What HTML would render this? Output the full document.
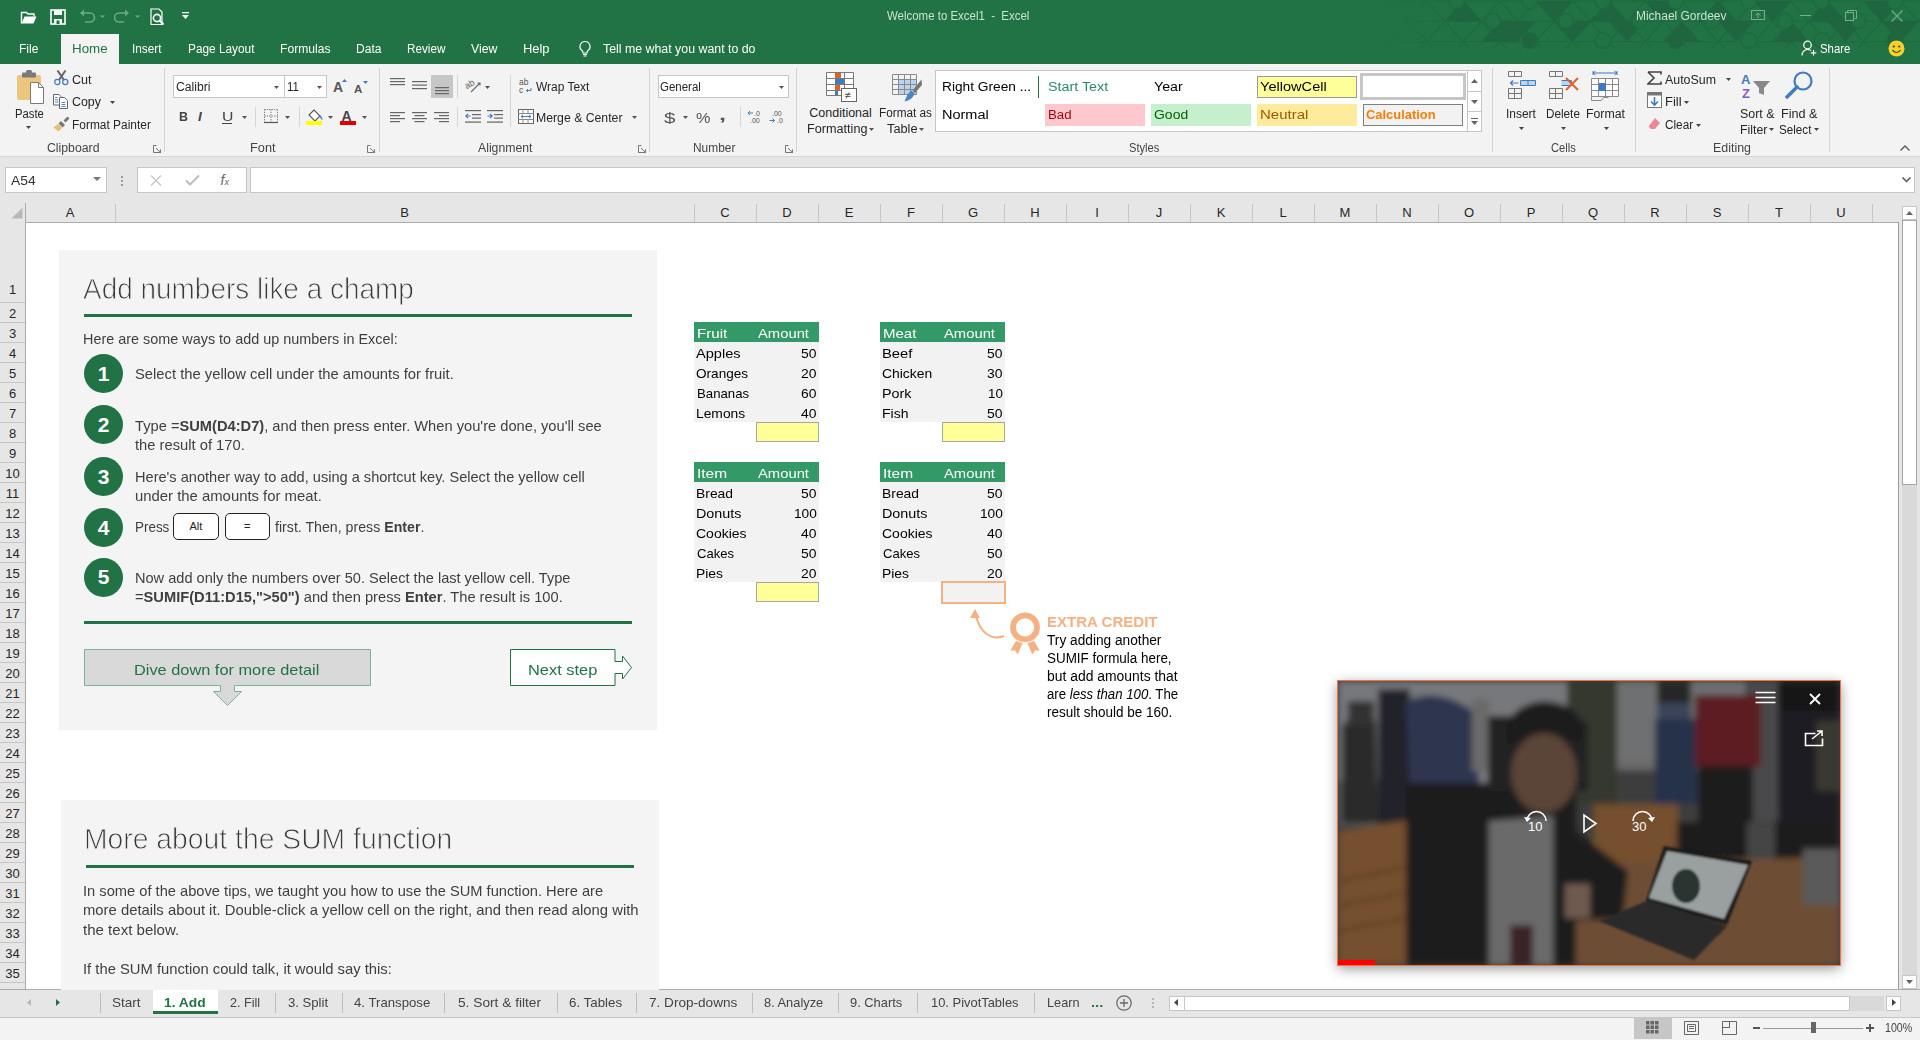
<!DOCTYPE html><html><head><meta charset="utf-8"><title>Excel</title><style>
html,body{margin:0;padding:0;width:1920px;height:1040px;overflow:hidden;background:#fff;font-family:"Liberation Sans",sans-serif;}
.a{position:absolute;}
.t{position:absolute;white-space:pre;transform-origin:0 0;}
</style></head><body>

<div class="a" style="left:0px;top:0px;width:1920px;height:64px;background:#217346;"></div>
<svg class="a" style="left:1380px;top:0px;" width="540" height="52" viewBox="0 0 540 52"><defs><linearGradient id="fadeX" x1="0" x2="1" y1="0" y2="0"><stop offset="0" stop-color="#fff" stop-opacity="0"/><stop offset="0.15" stop-color="#fff" stop-opacity="1"/><stop offset="1" stop-color="#fff" stop-opacity="1"/></linearGradient><mask id="fm"><rect x="0" y="0" width="540" height="64" fill="url(#fadeX)"/></mask></defs><g mask="url(#fm)"><path d="M0 1.0H540M0 21.3H540M0 41.6H540M-153.4 61.9L-98.8 1.0M-153.4 61.9L-208.0 1.0M-117.0 61.9L-62.4 1.0M-117.0 61.9L-171.6 1.0M-80.6 61.9L-26.0 1.0M-80.6 61.9L-135.2 1.0M-44.2 61.9L10.4 1.0M-44.2 61.9L-98.8 1.0M-7.8 61.9L46.8 1.0M-7.8 61.9L-62.4 1.0M28.6 61.9L83.2 1.0M28.6 61.9L-26.0 1.0M65.0 61.9L119.6 1.0M65.0 61.9L10.4 1.0M101.4 61.9L156.0 1.0M101.4 61.9L46.8 1.0M137.8 61.9L192.4 1.0M137.8 61.9L83.2 1.0M174.2 61.9L228.8 1.0M174.2 61.9L119.6 1.0M210.6 61.9L265.2 1.0M210.6 61.9L156.0 1.0M247.0 61.9L301.6 1.0M247.0 61.9L192.4 1.0M283.4 61.9L338.0 1.0M283.4 61.9L228.8 1.0M319.8 61.9L374.4 1.0M319.8 61.9L265.2 1.0M356.2 61.9L410.8 1.0M356.2 61.9L301.6 1.0M392.6 61.9L447.2 1.0M392.6 61.9L338.0 1.0M429.0 61.9L483.6 1.0M429.0 61.9L374.4 1.0M465.4 61.9L520.0 1.0M465.4 61.9L410.8 1.0M501.8 61.9L556.4 1.0M501.8 61.9L447.2 1.0M538.2 61.9L592.8 1.0M538.2 61.9L483.6 1.0M574.6 61.9L629.2 1.0M574.6 61.9L520.0 1.0M611.0 61.9L665.6 1.0M611.0 61.9L556.4 1.0M647.4 61.9L702.0 1.0M647.4 61.9L592.8 1.0M683.8 61.9L738.4 1.0M683.8 61.9L629.2 1.0M720.2 61.9L774.8 1.0M720.2 61.9L665.6 1.0M756.6 61.9L811.2 1.0M756.6 61.9L702.0 1.0" stroke="#1d6b3f" stroke-width="1.3" fill="none" clip-path="inset(0 0 14px 0)"/><path d="M83.2 1.0L101.4 21.3L65.0 21.3zM119.6 21.3L137.8 41.6L101.4 41.6zM119.6 21.3L156.0 21.3L137.8 41.6zM156.0 1.0L192.4 1.0L174.2 21.3zM174.2 21.3L210.6 21.3L192.4 41.6zM228.8 1.0L247.0 21.3L210.6 21.3zM228.8 21.3L265.2 21.3L247.0 41.6zM265.2 1.0L301.6 1.0L283.4 21.3zM301.6 21.3L319.8 41.6L283.4 41.6zM338.0 1.0L356.2 21.3L319.8 21.3zM338.0 21.3L374.4 21.3L356.2 41.6zM374.4 1.0L410.8 1.0L392.6 21.3zM410.8 21.3L429.0 41.6L392.6 41.6zM447.2 1.0L465.4 21.3L429.0 21.3zM447.2 21.3L483.6 21.3L465.4 41.6zM483.6 1.0L520.0 1.0L501.8 21.3zM501.8 21.3L538.2 21.3L520.0 41.6z" fill="#1e6540"/><circle cx="76.6" cy="1.4" r="7.5" fill="#217346" stroke="#1d6b3f" stroke-width="1.6"/><circle cx="113.1" cy="21" r="7.5" fill="#217346" stroke="#1d6b3f" stroke-width="1.6"/><circle cx="149.6" cy="1.4" r="7.5" fill="#217346" stroke="#1d6b3f" stroke-width="1.6"/><circle cx="186.1" cy="21" r="7.5" fill="#217346" stroke="#1d6b3f" stroke-width="1.6"/><circle cx="222.6" cy="1.4" r="7.5" fill="#217346" stroke="#1d6b3f" stroke-width="1.6"/><circle cx="259.1" cy="21" r="7.5" fill="#217346" stroke="#1d6b3f" stroke-width="1.6"/><circle cx="295.6" cy="1.4" r="7.5" fill="#217346" stroke="#1d6b3f" stroke-width="1.6"/><circle cx="332.1" cy="21" r="7.5" fill="#217346" stroke="#1d6b3f" stroke-width="1.6"/><circle cx="368.6" cy="1.4" r="7.5" fill="#217346" stroke="#1d6b3f" stroke-width="1.6"/><circle cx="405.1" cy="21" r="7.5" fill="#217346" stroke="#1d6b3f" stroke-width="1.6"/><circle cx="441.6" cy="1.4" r="7.5" fill="#217346" stroke="#1d6b3f" stroke-width="1.6"/><circle cx="478.1" cy="21" r="7.5" fill="#217346" stroke="#1d6b3f" stroke-width="1.6"/><circle cx="514.6" cy="1.4" r="7.5" fill="#217346" stroke="#1d6b3f" stroke-width="1.6"/><circle cx="551.1" cy="21" r="7.5" fill="#217346" stroke="#1d6b3f" stroke-width="1.6"/><circle cx="149.8" cy="40.6" r="7.8" fill="#1e6540" stroke="#1d6b3f" stroke-width="1.6"/><circle cx="222.8" cy="40.6" r="7.8" fill="#217346" stroke="#1d6b3f" stroke-width="1.6"/><circle cx="295.8" cy="40.6" r="7.8" fill="#1e6540" stroke="#1d6b3f" stroke-width="1.6"/><circle cx="368.8" cy="40.6" r="7.8" fill="#217346" stroke="#1d6b3f" stroke-width="1.6"/><circle cx="441.8" cy="40.6" r="7.8" fill="#217346" stroke="#1d6b3f" stroke-width="1.6"/><circle cx="514.8" cy="40.6" r="7.8" fill="#1e6540" stroke="#1d6b3f" stroke-width="1.6"/><circle cx="587.8" cy="40.6" r="7.8" fill="#217346" stroke="#1d6b3f" stroke-width="1.6"/></g></svg>
<svg class="a" style="left:20px;top:9px;" width="20" height="16" viewBox="0 0 20 16"><path d="M1.5 14.5V3.5h5l1.5 1.5h6v2.5" fill="none" stroke="#fff" stroke-width="1.4"/><path d="M1.5 14.5l3-7h12l-3 7z" fill="#fff"/></svg>
<svg class="a" style="left:50px;top:9px;" width="16" height="16" viewBox="0 0 16 16"><rect x="1" y="1" width="14" height="14" fill="none" stroke="#fff" stroke-width="1.6"/><rect x="4" y="1" width="8" height="5" fill="#fff"/><rect x="4" y="10" width="8" height="5" fill="#fff"/><rect x="6.5" y="11.5" width="3" height="3.5" fill="#217346"/></svg>
<svg class="a" style="left:79px;top:9px;" width="26" height="15" viewBox="0 0 26 15"><path d="M3 4h8a4.5 4.5 0 0 1 0 9H6" fill="none" stroke="#6aa886" stroke-width="1.6"/><path d="M1 4l4-3.5v7z" fill="#6aa886"/><path d="M21 6.5h5l-2.5 2.5z" fill="#6aa886"/></svg>
<svg class="a" style="left:114px;top:9px;" width="26" height="15" viewBox="0 0 26 15"><path d="M13 4H5a4.5 4.5 0 0 0 0 9h5" fill="none" stroke="#6aa886" stroke-width="1.6"/><path d="M15 4l-4-3.5v7z" fill="#6aa886"/><path d="M21 6.5h5l-2.5 2.5z" fill="#6aa886"/></svg>
<svg class="a" style="left:150px;top:8px;" width="17" height="18" viewBox="0 0 17 18"><path d="M1 1h8l3 3v12.5H1z" fill="none" stroke="#fff" stroke-width="1.2"/><circle cx="7" cy="10" r="3.6" fill="none" stroke="#fff" stroke-width="1.6"/><path d="M9.5 12.5l4 4" stroke="#fff" stroke-width="2"/></svg>
<svg class="a" style="left:182px;top:12px;" width="8" height="9" viewBox="0 0 8 9"><rect x="0" y="0" width="7" height="1.3" fill="#fff"/><path d="M0 3h7l-3.5 4z" fill="#fff"/></svg>
<span class="t" style="left:887.31px;top:10.00px;font-size:12.5px;line-height:12.5px;color:#c9e2d2;transform:scaleX(0.9162);">Welcome to Excel1  -  Excel</span>
<span class="t" style="left:1636.28px;top:10.00px;font-size:12.5px;line-height:12.5px;color:#c9e2d2;transform:scaleX(0.9570);">Michael Gordeev</span>
<svg class="a" style="left:1751px;top:10px;" width="15" height="11" viewBox="0 0 15 11"><rect x="0.5" y="0.5" width="13" height="9" fill="none" stroke="#79ab8f"/><path d="M7 8V3M4.5 5.5L7 3l2.5 2.5" fill="none" stroke="#79ab8f"/></svg>
<div class="a" style="left:1800px;top:15px;width:11px;height:1px;background:#79ab8f;"></div>
<svg class="a" style="left:1845px;top:10px;" width="12" height="11" viewBox="0 0 12 11"><rect x="0.5" y="2.5" width="8" height="8" fill="none" stroke="#79ab8f"/><path d="M2.5 2.5V0.5h9v8h-2" fill="none" stroke="#79ab8f"/></svg>
<svg class="a" style="left:1891px;top:10px;" width="12" height="12" viewBox="0 0 12 12"><path d="M0.5 0.5l11 11M11.5 0.5l-11 11" stroke="#79ab8f" stroke-width="1.1"/></svg>
<div class="a" style="left:61px;top:34px;width:58px;height:30px;background:#f3f3f3;"></div>
<span class="t" style="left:19.28px;top:43.00px;font-size:12.5px;line-height:12.5px;color:#ffffff;transform:scaleX(0.9648);">File</span>
<span class="t" style="left:72.20px;top:43.00px;font-size:12.5px;line-height:12.5px;color:#217346;transform:scaleX(1.0677);">Home</span>
<span class="t" style="left:132.29px;top:43.00px;font-size:12.5px;line-height:12.5px;color:#ffffff;transform:scaleX(0.9407);">Insert</span>
<span class="t" style="left:188.29px;top:43.00px;font-size:12.5px;line-height:12.5px;color:#ffffff;transform:scaleX(0.9461);">Page Layout</span>
<span class="t" style="left:280.27px;top:43.00px;font-size:12.5px;line-height:12.5px;color:#ffffff;transform:scaleX(0.9685);">Formulas</span>
<span class="t" style="left:356.28px;top:43.00px;font-size:12.5px;line-height:12.5px;color:#ffffff;transform:scaleX(0.9636);">Data</span>
<span class="t" style="left:407.30px;top:43.00px;font-size:12.5px;line-height:12.5px;color:#ffffff;transform:scaleX(0.9367);">Review</span>
<span class="t" style="left:471.26px;top:43.00px;font-size:12.5px;line-height:12.5px;color:#ffffff;transform:scaleX(0.9852);">View</span>
<span class="t" style="left:523.23px;top:43.00px;font-size:12.5px;line-height:12.5px;color:#ffffff;transform:scaleX(1.0323);">Help</span>
<span class="t" style="left:603.26px;top:43.00px;font-size:12.5px;line-height:12.5px;color:#ffffff;transform:scaleX(0.9885);">Tell me what you want to do</span>
<svg class="a" style="left:578px;top:40px;" width="14" height="17" viewBox="0 0 14 17"><path d="M7 1.5a5 5 0 0 0-3 9c.8.7 1 1.5 1 2.5h4c0-1 .2-1.8 1-2.5a5 5 0 0 0-3-9z" fill="none" stroke="#fff" stroke-width="1.2"/><path d="M5 14.5h4M5.5 16h3" stroke="#fff" stroke-width="1.1"/></svg>
<svg class="a" style="left:1801px;top:40px;" width="16" height="16" viewBox="0 0 16 16"><circle cx="6.5" cy="5" r="3.8" fill="none" stroke="#fff" stroke-width="1.2"/><path d="M1 15.5c0-3.5 2.5-6 5.5-6 1.5 0 2.5.4 3.5 1" fill="none" stroke="#fff" stroke-width="1.2"/><path d="M12.5 10v5.5M9.8 12.8h5.5" stroke="#fff" stroke-width="1.2"/></svg>
<span class="t" style="left:1820.32px;top:43.00px;font-size:12.5px;line-height:12.5px;color:#ffffff;transform:scaleX(0.9103);">Share</span>
<svg class="a" style="left:1888px;top:40px;" width="17" height="17" viewBox="0 0 17 17"><circle cx="8.5" cy="8.5" r="8" fill="#f7d02c"/><circle cx="5.8" cy="6.5" r="1.1" fill="#3b3b00"/><circle cx="11.2" cy="6.5" r="1.1" fill="#3b3b00"/><path d="M4.5 10a4.5 4.5 0 0 0 8 0" fill="none" stroke="#3b3b00" stroke-width="1.1"/></svg>
<div class="a" style="left:0px;top:64px;width:1920px;height:92px;background:#f3f3f3;"></div>
<div class="a" style="left:0px;top:156px;width:1920px;height:1px;background:#d6d6d6;"></div>
<svg class="a" style="left:16px;top:70px;" width="30" height="34" viewBox="0 0 30 34"><rect x="1" y="5" width="24" height="25" rx="2" fill="#ecc67d"/><rect x="6" y="2.5" width="14" height="5" rx="1" fill="#7a7a7a"/><rect x="10" y="0" width="6" height="4" rx="1.5" fill="#7a7a7a"/><path d="M14.5 12.5h8l5 5v16h-13z" fill="#fff" stroke="#7a7a7a" stroke-width="1"/><path d="M22.5 12.5v5h5" fill="none" stroke="#7a7a7a"/></svg>
<span class="t" style="left:14.82px;top:108.00px;font-size:12.5px;line-height:12.5px;color:#262626;transform:scaleX(0.9026);">Paste</span>
<svg class="a" style="left:26px;top:126px;" width="5" height="3" viewBox="0 0 5 3"><path d="M0 0h5l-2.5 3z" fill="#444"/></svg>
<svg class="a" style="left:54px;top:70px;" width="15" height="16" viewBox="0 0 15 16"><path d="M3.5 0.5l6.5 9.5M11.5 0.5L5 10" stroke="#666" stroke-width="2"/><circle cx="3.3" cy="12" r="2.6" fill="none" stroke="#3d7bc4" stroke-width="1.2"/><circle cx="11.3" cy="12" r="2.6" fill="none" stroke="#3d7bc4" stroke-width="1.2"/></svg>
<span class="t" style="left:71.75px;top:74.00px;font-size:12.5px;line-height:12.5px;color:#262626;transform:scaleX(1.0026);">Cut</span>
<svg class="a" style="left:53px;top:94px;" width="16" height="15" viewBox="0 0 16 15"><path d="M0.5 0.5h5.5l2 2v8.5h-7.5z" fill="#fff" stroke="#666"/><path d="M6.5 3.5h5l3 3v8h-8z" fill="#fff" stroke="#666"/><path d="M2 3.5h2.5M2 5.8h3.5M2 8h3.5M8.5 8.5h4M8.5 10.5h4M8.5 12.5h4" stroke="#3d7bc4" stroke-width="0.9"/></svg>
<span class="t" style="left:71.76px;top:96.00px;font-size:12.5px;line-height:12.5px;color:#262626;transform:scaleX(0.9932);">Copy</span>
<svg class="a" style="left:110px;top:101px;" width="5" height="3" viewBox="0 0 5 3"><path d="M0 0h5l-2.5 3z" fill="#444"/></svg>
<svg class="a" style="left:53px;top:116px;" width="17" height="16" viewBox="0 0 17 16"><path d="M10.5 4.5l4-4 2 2-4 4z" fill="#777"/><path d="M8 5l4 4-2.5 2.5-4-4z" fill="#777"/><path d="M5 8l4 4-3.5 3.5L0.5 11.5z" fill="#e8bf6e"/></svg>
<span class="t" style="left:71.78px;top:119.00px;font-size:12.5px;line-height:12.5px;color:#262626;transform:scaleX(0.9548);">Format Painter</span>
<span class="t" style="left:47.26px;top:142.00px;font-size:12.5px;line-height:12.5px;color:#444;transform:scaleX(0.9805);">Clipboard</span>
<svg class="a" style="left:153px;top:145px;" width="8" height="8" viewBox="0 0 8 8"><path d="M0.5 0.5h3M0.5 0.5v7h7v-3" fill="none" stroke="#777"/><path d="M3 3l4.5 4.5M7.5 4.5v3h-3" fill="none" stroke="#777"/></svg>
<div class="a" style="left:164px;top:68px;width:1px;height:84px;background:#d5d5d5;"></div>
<div class="a" style="left:173px;top:75px;width:112px;height:23px;background:#fff;border:1px solid #c6c6c6;box-sizing:border-box;"></div>
<div class="a" style="left:284px;top:75px;width:43px;height:23px;background:#fff;border:1px solid #c6c6c6;box-sizing:border-box;"></div>
<span class="t" style="left:175.77px;top:81.00px;font-size:12.5px;line-height:12.5px;color:#262626;transform:scaleX(0.9724);">Calibri</span>
<span class="t" style="left:286.81px;top:81.00px;font-size:12.5px;line-height:12.5px;color:#262626;transform:scaleX(0.9143);">11</span>
<svg class="a" style="left:273.5px;top:85.5px;" width="5" height="3" viewBox="0 0 5 3"><path d="M0 0h5l-2.5 3z" fill="#555"/></svg>
<svg class="a" style="left:317px;top:85.5px;" width="5" height="3" viewBox="0 0 5 3"><path d="M0 0h5l-2.5 3z" fill="#555"/></svg>
<svg class="a" style="left:333px;top:78px;" width="14" height="15" viewBox="0 0 14 15"><text x="0" y="14" font-family="Liberation Sans" font-size="14" font-weight="bold" fill="#555">A</text><path d="M9 4l2.5-3 2.5 3z" fill="#3d7bc4"/></svg>
<svg class="a" style="left:354px;top:80px;" width="14" height="13" viewBox="0 0 14 13"><text x="0" y="12.5" font-family="Liberation Sans" font-size="11.5" font-weight="bold" fill="#555">A</text><path d="M9 1h5l-2.5 3z" fill="#3d7bc4"/></svg>
<span class="t" style="left:179.25px;top:110.00px;font-size:13px;line-height:13px;color:#444;font-weight:bold;transform:scaleX(0.9578);">B</span>
<span class="t" style="left:197.98px;top:110.00px;font-size:13.5px;line-height:13.5px;color:#444;font-weight:bold;font-style:italic;font-family:"Liberation Serif",serif;transform:scaleX(3.7285);">I</span>
<span class="t" style="left:221.55px;top:110.00px;font-size:13px;line-height:13px;color:#444;transform:scaleX(1.2132);">U</span>
<div class="a" style="left:222px;top:123px;width:10px;height:1px;background:#444;"></div>
<svg class="a" style="left:242px;top:115.5px;" width="5" height="3" viewBox="0 0 5 3"><path d="M0 0h5l-2.5 3z" fill="#555"/></svg>
<div class="a" style="left:255px;top:107px;width:1px;height:20px;background:#d5d5d5;"></div>
<svg class="a" style="left:264px;top:109px;" width="14" height="15" viewBox="0 0 14 15"><path d="M0.5 0.5h13M0.5 0.5v13M13.5 .5v13M7 0.5v13M0.5 7h13" fill="none" stroke="#777" stroke-width="1" stroke-dasharray="1.2 1.2"/><path d="M0 13.5h14" stroke="#555" stroke-width="1.2"/></svg>
<svg class="a" style="left:285px;top:115.5px;" width="5" height="3" viewBox="0 0 5 3"><path d="M0 0h5l-2.5 3z" fill="#555"/></svg>
<div class="a" style="left:299px;top:107px;width:1px;height:20px;background:#d5d5d5;"></div>
<svg class="a" style="left:306px;top:109px;" width="17" height="16" viewBox="0 0 17 16"><path d="M3 6l5-5 6 6-5 5z" fill="#fff" stroke="#555" stroke-width="1.1"/><path d="M14 7c1 1.5 2 2.5 2 3.5" stroke="#3d7bc4" stroke-width="1.5" fill="none"/><rect x="0" y="12" width="16" height="4" fill="#ffff00"/></svg>
<svg class="a" style="left:328px;top:115.5px;" width="5" height="3" viewBox="0 0 5 3"><path d="M0 0h5l-2.5 3z" fill="#555"/></svg>
<svg class="a" style="left:340px;top:109px;" width="17" height="16" viewBox="0 0 17 16"><text x="1.5" y="11.5" font-family="Liberation Sans" font-size="14" font-weight="bold" fill="#444">A</text><rect x="0" y="12" width="16" height="4" fill="#e00000"/></svg>
<svg class="a" style="left:362px;top:115.5px;" width="5" height="3" viewBox="0 0 5 3"><path d="M0 0h5l-2.5 3z" fill="#555"/></svg>
<span class="t" style="left:250.23px;top:142.00px;font-size:12.5px;line-height:12.5px;color:#444;transform:scaleX(1.0206);">Font</span>
<svg class="a" style="left:367px;top:145px;" width="8" height="8" viewBox="0 0 8 8"><path d="M0.5 0.5h3M0.5 0.5v7h7v-3" fill="none" stroke="#777"/><path d="M3 3l4.5 4.5M7.5 4.5v3h-3" fill="none" stroke="#777"/></svg>
<div class="a" style="left:379px;top:68px;width:1px;height:84px;background:#d5d5d5;"></div>
<svg class="a" style="left:390px;top:78px;" width="15" height="9" viewBox="0 0 15 9"><rect x="0" y="0" width="15" height="1.2" fill="#666"/><rect x="0" y="3" width="15" height="1.2" fill="#666"/><rect x="0" y="6" width="15" height="1.2" fill="#666"/></svg>
<svg class="a" style="left:412px;top:81px;" width="16" height="9" viewBox="0 0 16 9"><rect x="0" y="0" width="15" height="1.2" fill="#666"/><rect x="0" y="3.5" width="15" height="1.2" fill="#666"/><rect x="0" y="7" width="15" height="1.2" fill="#666"/></svg>
<div class="a" style="left:431px;top:75px;width:22px;height:23px;background:#c6c6c6;"></div>
<svg class="a" style="left:435px;top:87px;" width="15" height="8" viewBox="0 0 15 8"><rect x="0" y="0" width="14" height="1.2" fill="#666"/><rect x="0" y="3" width="14" height="1.2" fill="#666"/><rect x="0" y="6" width="14" height="1.2" fill="#666"/></svg>
<div class="a" style="left:457px;top:75px;width:1px;height:23px;background:#d5d5d5;"></div>
<svg class="a" style="left:465px;top:78px;" width="17" height="15" viewBox="0 0 17 15"><text x="0" y="9" font-family="Liberation Sans" font-size="9" fill="#666" transform="rotate(-30 5 7)">ab</text><path d="M6 14L15 5M12.5 5H15v2.5" fill="none" stroke="#666" stroke-width="1.1"/></svg>
<svg class="a" style="left:485px;top:85.5px;" width="5" height="3" viewBox="0 0 5 3"><path d="M0 0h5l-2.5 3z" fill="#555"/></svg>
<svg class="a" style="left:390px;top:112px;" width="15" height="11" viewBox="0 0 15 11"><rect x="0" y="0" width="15" height="1.2" fill="#666"/><rect x="0" y="3" width="10" height="1.2" fill="#666"/><rect x="0" y="6" width="15" height="1.2" fill="#666"/><rect x="0" y="9" width="10" height="1.2" fill="#666"/></svg>
<svg class="a" style="left:412px;top:112px;" width="15" height="11" viewBox="0 0 15 11"><rect x="0.0" y="0" width="15" height="1.2" fill="#666"/><rect x="2.5" y="3" width="10" height="1.2" fill="#666"/><rect x="0.0" y="6" width="15" height="1.2" fill="#666"/><rect x="2.5" y="9" width="10" height="1.2" fill="#666"/></svg>
<svg class="a" style="left:434px;top:112px;" width="15" height="11" viewBox="0 0 15 11"><rect x="0" y="0" width="15" height="1.2" fill="#666"/><rect x="5" y="3" width="10" height="1.2" fill="#666"/><rect x="0" y="6" width="15" height="1.2" fill="#666"/><rect x="5" y="9" width="10" height="1.2" fill="#666"/></svg>
<div class="a" style="left:457px;top:107px;width:1px;height:20px;background:#d5d5d5;"></div>
<svg class="a" style="left:465px;top:110px;" width="16" height="13" viewBox="0 0 16 13"><rect x="0" y="0" width="16" height="1.2" fill="#666"/><rect x="7" y="4" width="9" height="1.2" fill="#666"/><rect x="7" y="7.5" width="9" height="1.2" fill="#666"/><rect x="0" y="11.5" width="16" height="1.2" fill="#666"/><path d="M5.5 6H0.8M3 3.8L0.8 6 3 8.2" fill="none" stroke="#3d7bc4" stroke-width="1.2"/></svg>
<svg class="a" style="left:487px;top:110px;" width="16" height="13" viewBox="0 0 16 13"><rect x="0" y="0" width="16" height="1.2" fill="#666"/><rect x="7" y="4" width="9" height="1.2" fill="#666"/><rect x="7" y="7.5" width="9" height="1.2" fill="#666"/><rect x="0" y="11.5" width="16" height="1.2" fill="#666"/><path d="M0.5 6h4.7M3 3.8L5.2 6 3 8.2" fill="none" stroke="#3d7bc4" stroke-width="1.2"/></svg>
<div class="a" style="left:510px;top:75px;width:1px;height:52px;background:#d5d5d5;"></div>
<svg class="a" style="left:519px;top:78px;" width="14" height="16" viewBox="0 0 14 16"><text x="0" y="7" font-family="Liberation Sans" font-size="8.5" fill="#555">ab</text><text x="0" y="15" font-family="Liberation Sans" font-size="8.5" fill="#555">c</text><path d="M12 10v2.5H7.5M9 11l-1.5 1.5L9 14" fill="none" stroke="#3d7bc4"/></svg>
<span class="t" style="left:536.28px;top:81.00px;font-size:12.5px;line-height:12.5px;color:#262626;transform:scaleX(0.9574);">Wrap Text</span>
<svg class="a" style="left:518px;top:109px;" width="16" height="15" viewBox="0 0 16 15"><rect x="0.5" y="0.5" width="15" height="14" fill="#fff" stroke="#666"/><path d="M0.5 4.5h15M0.5 10.5h15M5 .5v4M10 .5v4M5 10.5v4M10 10.5v4" stroke="#888"/><path d="M3 7.5h10M5 5.8L3 7.5 5 9.2M11 5.8l2 1.7-2 1.7" fill="none" stroke="#3d7bc4"/></svg>
<span class="t" style="left:536.26px;top:112.00px;font-size:12.5px;line-height:12.5px;color:#262626;transform:scaleX(0.9800);">Merge &amp; Center</span>
<svg class="a" style="left:632px;top:116px;" width="5" height="3" viewBox="0 0 5 3"><path d="M0 0h5l-2.5 3z" fill="#555"/></svg>
<span class="t" style="left:478.27px;top:142.00px;font-size:12.5px;line-height:12.5px;color:#444;transform:scaleX(0.9798);">Alignment</span>
<svg class="a" style="left:638px;top:145px;" width="8" height="8" viewBox="0 0 8 8"><path d="M0.5 0.5h3M0.5 0.5v7h7v-3" fill="none" stroke="#777"/><path d="M3 3l4.5 4.5M7.5 4.5v3h-3" fill="none" stroke="#777"/></svg>
<div class="a" style="left:649px;top:68px;width:1px;height:84px;background:#d5d5d5;"></div>
<div class="a" style="left:658px;top:75px;width:131px;height:23px;background:#fff;border:1px solid #c6c6c6;box-sizing:border-box;"></div>
<span class="t" style="left:660.31px;top:81.00px;font-size:12.5px;line-height:12.5px;color:#262626;transform:scaleX(0.9189);">General</span>
<svg class="a" style="left:779px;top:85.5px;" width="5" height="3" viewBox="0 0 5 3"><path d="M0 0h5l-2.5 3z" fill="#555"/></svg>
<span class="t" style="left:663.76px;top:111.00px;font-size:14px;line-height:14px;color:#555;transform:scaleX(1.4713);">$</span>
<svg class="a" style="left:683px;top:116px;" width="5" height="3" viewBox="0 0 5 3"><path d="M0 0h5l-2.5 3z" fill="#555"/></svg>
<span class="t" style="left:696.03px;top:111.00px;font-size:14px;line-height:14px;color:#555;transform:scaleX(1.1603);">%</span>
<span class="t" style="left:719.48px;top:108.00px;font-size:14px;line-height:14px;color:#555;font-weight:bold;transform:scaleX(1.8094);">,</span>
<div class="a" style="left:740px;top:107px;width:1px;height:20px;background:#d5d5d5;"></div>
<svg class="a" style="left:747px;top:110px;" width="16" height="13" viewBox="0 0 16 13"><text x="7" y="6" font-family="Liberation Sans" font-size="7" fill="#555">.0</text><text x="3" y="13" font-family="Liberation Sans" font-size="7" fill="#555">.00</text><path d="M6 3H1M3 1L1 3l2 2" fill="none" stroke="#3d7bc4"/></svg>
<svg class="a" style="left:769px;top:110px;" width="16" height="13" viewBox="0 0 16 13"><text x="3" y="6" font-family="Liberation Sans" font-size="7" fill="#555">.00</text><text x="8" y="13" font-family="Liberation Sans" font-size="7" fill="#555">.0</text><path d="M0.5 10.5h5M3.5 8.5l2 2-2 2" fill="none" stroke="#3d7bc4"/></svg>
<span class="t" style="left:693.28px;top:142.00px;font-size:12.5px;line-height:12.5px;color:#444;transform:scaleX(0.9542);">Number</span>
<svg class="a" style="left:785px;top:145px;" width="8" height="8" viewBox="0 0 8 8"><path d="M0.5 0.5h3M0.5 0.5v7h7v-3" fill="none" stroke="#777"/><path d="M3 3l4.5 4.5M7.5 4.5v3h-3" fill="none" stroke="#777"/></svg>
<div class="a" style="left:796px;top:68px;width:1px;height:84px;background:#d5d5d5;"></div>
<svg class="a" style="left:826px;top:72px;" width="32" height="30" viewBox="0 0 32 30"><path d="M0.5 0.5h27v23h-27zM0.5 6.5h27M0.5 12.5h27M0.5 18.5h27M9.5 .5v23M18.5 .5v23" fill="#fff" stroke="#7a7a7a"/><rect x="9" y="1" width="6" height="5" fill="#e0602b"/><rect x="9" y="7" width="9" height="5" fill="#3d7bc4"/><rect x="9" y="13" width="5" height="5" fill="#e0602b"/><rect x="9" y="19" width="3" height="4" fill="#3d7bc4"/><rect x="15.5" y="16.5" width="15" height="13" fill="#fff" stroke="#666"/><text x="18.5" y="27" font-family="Liberation Sans" font-size="11" fill="#444">≠</text></svg>
<span class="t" style="left:809.25px;top:107.00px;font-size:12.5px;line-height:12.5px;color:#262626;">Conditional</span>
<span class="t" style="left:806.74px;top:123.00px;font-size:12.5px;line-height:12.5px;color:#262626;transform:scaleX(1.0129);">Formatting</span>
<svg class="a" style="left:869px;top:127.5px;" width="5" height="3" viewBox="0 0 5 3"><path d="M0 0h5l-2.5 3z" fill="#555"/></svg>
<svg class="a" style="left:891px;top:73px;" width="32" height="30" viewBox="0 0 32 30"><rect x="7" y="6" width="18" height="15" fill="#bcd3ee"/><path d="M1.5 1.5h24v20h-24zM1.5 6.5h24M1.5 11.5h24M1.5 16.5h24M7.5 1.5v20M13.5 1.5v20M19.5 1.5v20" fill="none" stroke="#8a8a8a" stroke-width="1"/><path d="M30.5 6.5l-9 11 2.5 2.5 7-8z" fill="#777"/><path d="M20.5 17.5l3 3c-1 4-5 7-10 8 1.5-4 3.5-9 7-11z" fill="#4a84c4"/></svg>
<span class="t" style="left:878.79px;top:107.00px;font-size:12.5px;line-height:12.5px;color:#262626;transform:scaleX(0.9404);">Format as</span>
<span class="t" style="left:886.73px;top:123.00px;font-size:12.5px;line-height:12.5px;color:#262626;transform:scaleX(1.0215);">Table</span>
<svg class="a" style="left:919px;top:127.5px;" width="5" height="3" viewBox="0 0 5 3"><path d="M0 0h5l-2.5 3z" fill="#555"/></svg>
<div class="a" style="left:935px;top:70px;width:547px;height:62px;background:#fff;border:1px solid #c6c6c6;box-sizing:border-box;"></div>
<span class="t" style="left:942.18px;top:81.00px;font-size:12.5px;line-height:12.5px;color:#000;transform:scaleX(1.0965);">Right Green ...</span>
<div class="a" style="left:1038px;top:76px;width:1px;height:22px;background:#217346;"></div>
<span class="t" style="left:1048.14px;top:81.00px;font-size:12.5px;line-height:12.5px;color:#2a8a6a;transform:scaleX(1.1453);">Start Text</span>
<span class="t" style="left:1154.15px;top:81.00px;font-size:12.5px;line-height:12.5px;color:#000;transform:scaleX(1.1361);">Year</span>
<div class="a" style="left:1257px;top:76px;width:100px;height:22px;background:#ffff99;border:1px solid #9a9a9a;box-sizing:border-box;"></div>
<span class="t" style="left:1260.13px;top:81.00px;font-size:12.5px;line-height:12.5px;color:#000;transform:scaleX(1.1666);">YellowCell</span>
<div class="a" style="left:1360px;top:73px;width:106px;height:27px;background:#fff;border:3px solid #c6c6c6;box-sizing:border-box;"></div>
<span class="t" style="left:942.13px;top:109.00px;font-size:12.5px;line-height:12.5px;color:#000;transform:scaleX(1.1599);">Normal</span>
<div class="a" style="left:1045px;top:104px;width:100px;height:22px;background:#ffc7ce;"></div>
<span class="t" style="left:1048.20px;top:109.00px;font-size:12.5px;line-height:12.5px;color:#9c0006;transform:scaleX(1.0602);">Bad</span>
<div class="a" style="left:1151px;top:104px;width:100px;height:22px;background:#c6efce;"></div>
<span class="t" style="left:1154.16px;top:109.00px;font-size:12.5px;line-height:12.5px;color:#006100;transform:scaleX(1.1171);">Good</span>
<div class="a" style="left:1257px;top:104px;width:100px;height:22px;background:#ffeb9c;"></div>
<span class="t" style="left:1260.10px;top:109.00px;font-size:12.5px;line-height:12.5px;color:#9c5700;transform:scaleX(1.1986);">Neutral</span>
<div class="a" style="left:1363px;top:104px;width:100px;height:22px;background:#f2f2f2;border:1px solid #7f7f7f;box-sizing:border-box;"></div>
<span class="t" style="left:1366.23px;top:109.00px;font-size:12.5px;line-height:12.5px;color:#fa7d00;font-weight:bold;transform:scaleX(1.0323);">Calculation</span>
<div class="a" style="left:1467px;top:70px;width:15px;height:62px;background:#fff;border:1px solid #c6c6c6;box-sizing:border-box;"></div>
<div class="a" style="left:1467px;top:91px;width:15px;height:1px;background:#c6c6c6;"></div>
<div class="a" style="left:1467px;top:111px;width:15px;height:1px;background:#c6c6c6;"></div>
<svg class="a" style="left:1471px;top:79px;" width="7" height="4" viewBox="0 0 7 4"><path d="M0 4L3.5 0 7 4z" fill="#666"/></svg>
<svg class="a" style="left:1471px;top:100px;" width="7" height="4" viewBox="0 0 7 4"><path d="M0 0h7L3.5 4z" fill="#666"/></svg>
<svg class="a" style="left:1471px;top:118px;" width="7" height="7" viewBox="0 0 7 7"><rect x="0" y="0" width="7" height="1" fill="#666"/><path d="M0 3h7L3.5 7z" fill="#666"/></svg>
<span class="t" style="left:1129.33px;top:142.00px;font-size:12.5px;line-height:12.5px;color:#444;transform:scaleX(0.8910);">Styles</span>
<div class="a" style="left:1492px;top:68px;width:1px;height:84px;background:#d5d5d5;"></div>
<svg class="a" style="left:1508px;top:71px;" width="28" height="28" viewBox="0 0 28 28"><path d="M0.5 0.5h13v5h-13zM6.5 .5v5" fill="none" stroke="#777"/><path d="M12.5 9.5h15v5h-15zM20 9.5v5" fill="#bcd3ee" stroke="#3d7bc4"/><path d="M10.5 12H2.5M5 9.5L2.5 12 5 14.5" fill="none" stroke="#3d7bc4" stroke-width="1.2"/><path d="M0.5 17.5h13v10h-13zM0.5 22.5h13M6.5 17.5v10" fill="none" stroke="#777"/></svg>
<span class="t" style="left:1506.28px;top:108.00px;font-size:12.5px;line-height:12.5px;color:#262626;transform:scaleX(0.9575);">Insert</span>
<svg class="a" style="left:1519px;top:127px;" width="5" height="3" viewBox="0 0 5 3"><path d="M0 0h5l-2.5 3z" fill="#444"/></svg>
<svg class="a" style="left:1549px;top:71px;" width="31" height="29" viewBox="0 0 31 29"><path d="M0.5 0.5h13v5h-13zM6.5 .5v5" fill="none" stroke="#777"/><path d="M12.5 9.5h10v5h-10" fill="#bcd3ee" stroke="#3d7bc4"/><path d="M0.5 17.5h13v10h-13zM0.5 22.5h13M6.5 17.5v10" fill="none" stroke="#777"/><path d="M17 7l12 12M29 7L17 19" stroke="#e0602b" stroke-width="2"/></svg>
<span class="t" style="left:1546.30px;top:108.00px;font-size:12.5px;line-height:12.5px;color:#262626;transform:scaleX(0.9382);">Delete</span>
<svg class="a" style="left:1561px;top:127px;" width="5" height="3" viewBox="0 0 5 3"><path d="M0 0h5l-2.5 3z" fill="#444"/></svg>
<svg class="a" style="left:1591px;top:70px;" width="30" height="32" viewBox="0 0 30 32"><path d="M2 3h24M2 1v4M26 1v4M4.5 1L2 3l2.5 2M23.5 1L26 3l-2.5 2" fill="none" stroke="#3d7bc4"/><path d="M0.5 8.5h27v18h-27zM0.5 14.5h27M0.5 20.5h27M7.5 8.5v18M14.5 8.5v18M21.5 8.5v18" fill="#fff" stroke="#8a8a8a"/><rect x="8" y="13" width="7" height="8" fill="#3d7bc4"/><path d="M0.5 26.5v4h10l2-3h5" fill="none" stroke="#8a8a8a"/></svg>
<span class="t" style="left:1586.26px;top:108.00px;font-size:12.5px;line-height:12.5px;color:#262626;transform:scaleX(0.9844);">Format</span>
<svg class="a" style="left:1604px;top:127px;" width="5" height="3" viewBox="0 0 5 3"><path d="M0 0h5l-2.5 3z" fill="#444"/></svg>
<span class="t" style="left:1551.33px;top:142.00px;font-size:12.5px;line-height:12.5px;color:#444;transform:scaleX(0.8936);">Cells</span>
<div class="a" style="left:1635px;top:68px;width:1px;height:84px;background:#d5d5d5;"></div>
<svg class="a" style="left:1647px;top:71px;" width="15" height="14" viewBox="0 0 15 14"><path d="M1 1h13v2.5M1 1l6 6-6 6h13v-2.5" fill="none" stroke="#444" stroke-width="1.6"/></svg>
<span class="t" style="left:1665.26px;top:74.00px;font-size:12.5px;line-height:12.5px;color:#262626;transform:scaleX(0.9915);">AutoSum</span>
<svg class="a" style="left:1726px;top:78px;" width="5" height="3" viewBox="0 0 5 3"><path d="M0 0h5l-2.5 3z" fill="#444"/></svg>
<svg class="a" style="left:1647px;top:92px;" width="15" height="16" viewBox="0 0 15 16"><rect x="0.5" y="0.5" width="14" height="15" fill="#fff" stroke="#777"/><rect x="0.5" y="0.5" width="14" height="3" fill="#777"/><path d="M7.5 5v8M4 9.5l3.5 3.5 3.5-3.5" fill="none" stroke="#3d7bc4" stroke-width="1.6"/></svg>
<span class="t" style="left:1665.22px;top:96.00px;font-size:12.5px;line-height:12.5px;color:#262626;transform:scaleX(1.0367);">Fill</span>
<svg class="a" style="left:1684px;top:100.5px;" width="5" height="3" viewBox="0 0 5 3"><path d="M0 0h5l-2.5 3z" fill="#444"/></svg>
<svg class="a" style="left:1648px;top:117px;" width="13" height="13" viewBox="0 0 13 13"><path d="M7 1l5 5-5 6H3L0.5 9.5z" fill="#e88a9a"/><path d="M1 13h11" stroke="#fff"/></svg>
<span class="t" style="left:1665.29px;top:119.00px;font-size:12.5px;line-height:12.5px;color:#262626;transform:scaleX(0.9410);">Clear</span>
<svg class="a" style="left:1695.5px;top:123.5px;" width="5" height="3" viewBox="0 0 5 3"><path d="M0 0h5l-2.5 3z" fill="#444"/></svg>
<svg class="a" style="left:1741px;top:72px;" width="32" height="27" viewBox="0 0 32 27"><text x="0" y="12" font-family="Liberation Sans" font-size="13" font-weight="bold" fill="#3d7bc4">A</text><text x="1" y="26" font-family="Liberation Sans" font-size="13" font-weight="bold" fill="#8a5ac2">Z</text><path d="M12 9h17l-6 7v7l-5-2v-5z" fill="#888"/></svg>
<span class="t" style="left:1739.76px;top:108.00px;font-size:12.5px;line-height:12.5px;color:#262626;transform:scaleX(0.9925);">Sort &amp;</span>
<span class="t" style="left:1739.76px;top:124.00px;font-size:12.5px;line-height:12.5px;color:#262626;transform:scaleX(0.9893);">Filter</span>
<svg class="a" style="left:1769px;top:127.5px;" width="5" height="3" viewBox="0 0 5 3"><path d="M0 0h5l-2.5 3z" fill="#444"/></svg>
<svg class="a" style="left:1785px;top:71px;" width="29" height="28" viewBox="0 0 29 28"><circle cx="18" cy="10" r="8.5" fill="none" stroke="#3d7bc4" stroke-width="2.2"/><path d="M12 16L2 26" stroke="#3d7bc4" stroke-width="3.5" stroke-linecap="round"/></svg>
<span class="t" style="left:1781.24px;top:108.00px;font-size:12.5px;line-height:12.5px;color:#262626;transform:scaleX(1.0104);">Find &amp;</span>
<span class="t" style="left:1779.30px;top:124.00px;font-size:12.5px;line-height:12.5px;color:#262626;transform:scaleX(0.9323);">Select</span>
<svg class="a" style="left:1814px;top:127.5px;" width="5" height="3" viewBox="0 0 5 3"><path d="M0 0h5l-2.5 3z" fill="#444"/></svg>
<span class="t" style="left:1713.25px;top:142.00px;font-size:12.5px;line-height:12.5px;color:#444;transform:scaleX(0.9936);">Editing</span>
<div class="a" style="left:1829px;top:68px;width:1px;height:84px;background:#d5d5d5;"></div>
<svg class="a" style="left:1900px;top:145px;" width="10" height="6" viewBox="0 0 10 6"><path d="M0.5 5.5L5 1l4.5 4.5" fill="none" stroke="#555" stroke-width="1.3"/></svg>
<div class="a" style="left:0px;top:157px;width:1920px;height:46px;background:#e6e6e6;"></div>
<div class="a" style="left:5px;top:167px;width:102px;height:26px;background:#fff;border:1px solid #c6c6c6;box-sizing:border-box;"></div>
<span class="t" style="left:11.17px;top:174.00px;font-size:13px;line-height:13px;color:#333;transform:scaleX(1.0658);">A54</span>
<svg class="a" style="left:93px;top:177px;" width="8" height="4" viewBox="0 0 8 4"><path d="M0 0h8L4 4z" fill="#777"/></svg>
<div class="a" style="left:121px;top:176px;width:2px;height:2px;background:#9a9a9a;"></div>
<div class="a" style="left:121px;top:180px;width:2px;height:2px;background:#9a9a9a;"></div>
<div class="a" style="left:121px;top:184px;width:2px;height:2px;background:#9a9a9a;"></div>
<div class="a" style="left:137px;top:167px;width:110px;height:26px;background:#fff;border:1px solid #c6c6c6;box-sizing:border-box;"></div>
<svg class="a" style="left:150px;top:175px;" width="12" height="11" viewBox="0 0 12 11"><path d="M1 .5l10 10M11 .5l-10 10" stroke="#c8c8c8" stroke-width="1.4"/></svg>
<svg class="a" style="left:185px;top:175px;" width="15" height="11" viewBox="0 0 15 11"><path d="M1 5.5l4 4 9-9" fill="none" stroke="#bdbdbd" stroke-width="2"/></svg>
<span class="t" style="left:220.50px;top:173.00px;font-size:14px;line-height:14px;color:#666;font-family:"Liberation Serif",serif;transform:scaleX(1.7882);"><i>f</i><span style="font-size:9px"><i>x</i></span></span>
<div class="a" style="left:250px;top:167px;width:1665px;height:26px;background:#fff;border:1px solid #c6c6c6;box-sizing:border-box;"></div>
<svg class="a" style="left:1902px;top:177px;" width="9" height="6" viewBox="0 0 9 6"><path d="M.5 .5l4 4 4-4" fill="none" stroke="#555" stroke-width="1.5"/></svg>
<div class="a" style="left:0px;top:203px;width:1899px;height:19px;background:#e6e6e6;"></div>
<div class="a" style="left:0px;top:222px;width:1898px;height:1px;background:#ababab;"></div>
<div class="a" style="left:0px;top:222px;width:25px;height:768px;background:#e6e6e6;"></div>
<div class="a" style="left:25px;top:203px;width:1px;height:787px;background:#ababab;"></div>
<svg class="a" style="left:11px;top:207px;" width="12" height="12" viewBox="0 0 12 12"><path d="M11.5 .5v11H.5z" fill="#b8b8b8"/></svg>
<div class="a" style="left:115px;top:204px;width:1px;height:18px;background:#c6c6c6;"></div>
<span class="t" style="left:65.66px;top:206.00px;font-size:13px;line-height:13px;color:#262626;">A</span>
<div class="a" style="left:694px;top:204px;width:1px;height:18px;background:#c6c6c6;"></div>
<span class="t" style="left:400.16px;top:206.00px;font-size:13px;line-height:13px;color:#262626;">B</span>
<div class="a" style="left:756px;top:204px;width:1px;height:18px;background:#c6c6c6;"></div>
<span class="t" style="left:720.30px;top:206.00px;font-size:13px;line-height:13px;color:#262626;">C</span>
<div class="a" style="left:818px;top:204px;width:1px;height:18px;background:#c6c6c6;"></div>
<span class="t" style="left:782.30px;top:206.00px;font-size:13px;line-height:13px;color:#262626;">D</span>
<div class="a" style="left:880px;top:204px;width:1px;height:18px;background:#c6c6c6;"></div>
<span class="t" style="left:844.66px;top:206.00px;font-size:13px;line-height:13px;color:#262626;">E</span>
<div class="a" style="left:942px;top:204px;width:1px;height:18px;background:#c6c6c6;"></div>
<span class="t" style="left:907.02px;top:206.00px;font-size:13px;line-height:13px;color:#262626;">F</span>
<div class="a" style="left:1004px;top:204px;width:1px;height:18px;background:#c6c6c6;"></div>
<span class="t" style="left:967.94px;top:206.00px;font-size:13px;line-height:13px;color:#262626;">G</span>
<div class="a" style="left:1066px;top:204px;width:1px;height:18px;background:#c6c6c6;"></div>
<span class="t" style="left:1030.30px;top:206.00px;font-size:13px;line-height:13px;color:#262626;">H</span>
<div class="a" style="left:1128px;top:204px;width:1px;height:18px;background:#c6c6c6;"></div>
<span class="t" style="left:1095.19px;top:206.00px;font-size:13px;line-height:13px;color:#262626;">I</span>
<div class="a" style="left:1190px;top:204px;width:1px;height:18px;background:#c6c6c6;"></div>
<span class="t" style="left:1155.75px;top:206.00px;font-size:13px;line-height:13px;color:#262626;">J</span>
<div class="a" style="left:1252px;top:204px;width:1px;height:18px;background:#c6c6c6;"></div>
<span class="t" style="left:1216.66px;top:206.00px;font-size:13px;line-height:13px;color:#262626;">K</span>
<div class="a" style="left:1314px;top:204px;width:1px;height:18px;background:#c6c6c6;"></div>
<span class="t" style="left:1279.38px;top:206.00px;font-size:13px;line-height:13px;color:#262626;">L</span>
<div class="a" style="left:1376px;top:204px;width:1px;height:18px;background:#c6c6c6;"></div>
<span class="t" style="left:1339.58px;top:206.00px;font-size:13px;line-height:13px;color:#262626;">M</span>
<div class="a" style="left:1438px;top:204px;width:1px;height:18px;background:#c6c6c6;"></div>
<span class="t" style="left:1402.30px;top:206.00px;font-size:13px;line-height:13px;color:#262626;">N</span>
<div class="a" style="left:1500px;top:204px;width:1px;height:18px;background:#c6c6c6;"></div>
<span class="t" style="left:1463.94px;top:206.00px;font-size:13px;line-height:13px;color:#262626;">O</span>
<div class="a" style="left:1562px;top:204px;width:1px;height:18px;background:#c6c6c6;"></div>
<span class="t" style="left:1526.66px;top:206.00px;font-size:13px;line-height:13px;color:#262626;">P</span>
<div class="a" style="left:1624px;top:204px;width:1px;height:18px;background:#c6c6c6;"></div>
<span class="t" style="left:1587.94px;top:206.00px;font-size:13px;line-height:13px;color:#262626;">Q</span>
<div class="a" style="left:1686px;top:204px;width:1px;height:18px;background:#c6c6c6;"></div>
<span class="t" style="left:1650.30px;top:206.00px;font-size:13px;line-height:13px;color:#262626;">R</span>
<div class="a" style="left:1748px;top:204px;width:1px;height:18px;background:#c6c6c6;"></div>
<span class="t" style="left:1712.66px;top:206.00px;font-size:13px;line-height:13px;color:#262626;">S</span>
<div class="a" style="left:1810px;top:204px;width:1px;height:18px;background:#c6c6c6;"></div>
<span class="t" style="left:1775.02px;top:206.00px;font-size:13px;line-height:13px;color:#262626;">T</span>
<div class="a" style="left:1872px;top:204px;width:1px;height:18px;background:#c6c6c6;"></div>
<span class="t" style="left:1836.30px;top:206.00px;font-size:13px;line-height:13px;color:#262626;">U</span>
<div class="a" style="left:0px;top:302px;width:25px;height:1px;background:#c6c6c6;"></div>
<span class="t" style="left:8.88px;top:283.00px;font-size:13px;line-height:13px;color:#262626;">1</span>
<div class="a" style="left:0px;top:322px;width:25px;height:1px;background:#c6c6c6;"></div>
<span class="t" style="left:8.88px;top:307.00px;font-size:13px;line-height:13px;color:#262626;">2</span>
<div class="a" style="left:0px;top:342px;width:25px;height:1px;background:#c6c6c6;"></div>
<span class="t" style="left:8.88px;top:327.00px;font-size:13px;line-height:13px;color:#262626;">3</span>
<div class="a" style="left:0px;top:362px;width:25px;height:1px;background:#c6c6c6;"></div>
<span class="t" style="left:8.88px;top:347.00px;font-size:13px;line-height:13px;color:#262626;">4</span>
<div class="a" style="left:0px;top:382px;width:25px;height:1px;background:#c6c6c6;"></div>
<span class="t" style="left:8.88px;top:367.00px;font-size:13px;line-height:13px;color:#262626;">5</span>
<div class="a" style="left:0px;top:402px;width:25px;height:1px;background:#c6c6c6;"></div>
<span class="t" style="left:8.88px;top:387.00px;font-size:13px;line-height:13px;color:#262626;">6</span>
<div class="a" style="left:0px;top:422px;width:25px;height:1px;background:#c6c6c6;"></div>
<span class="t" style="left:8.88px;top:407.00px;font-size:13px;line-height:13px;color:#262626;">7</span>
<div class="a" style="left:0px;top:442px;width:25px;height:1px;background:#c6c6c6;"></div>
<span class="t" style="left:8.88px;top:427.00px;font-size:13px;line-height:13px;color:#262626;">8</span>
<div class="a" style="left:0px;top:462px;width:25px;height:1px;background:#c6c6c6;"></div>
<span class="t" style="left:8.88px;top:447.00px;font-size:13px;line-height:13px;color:#262626;">9</span>
<div class="a" style="left:0px;top:482px;width:25px;height:1px;background:#c6c6c6;"></div>
<span class="t" style="left:5.27px;top:467.00px;font-size:13px;line-height:13px;color:#262626;">10</span>
<div class="a" style="left:0px;top:502px;width:25px;height:1px;background:#c6c6c6;"></div>
<span class="t" style="left:5.75px;top:487.00px;font-size:13px;line-height:13px;color:#262626;">11</span>
<div class="a" style="left:0px;top:522px;width:25px;height:1px;background:#c6c6c6;"></div>
<span class="t" style="left:5.27px;top:507.00px;font-size:13px;line-height:13px;color:#262626;">12</span>
<div class="a" style="left:0px;top:542px;width:25px;height:1px;background:#c6c6c6;"></div>
<span class="t" style="left:5.27px;top:527.00px;font-size:13px;line-height:13px;color:#262626;">13</span>
<div class="a" style="left:0px;top:562px;width:25px;height:1px;background:#c6c6c6;"></div>
<span class="t" style="left:5.27px;top:547.00px;font-size:13px;line-height:13px;color:#262626;">14</span>
<div class="a" style="left:0px;top:582px;width:25px;height:1px;background:#c6c6c6;"></div>
<span class="t" style="left:5.27px;top:567.00px;font-size:13px;line-height:13px;color:#262626;">15</span>
<div class="a" style="left:0px;top:602px;width:25px;height:1px;background:#c6c6c6;"></div>
<span class="t" style="left:5.27px;top:587.00px;font-size:13px;line-height:13px;color:#262626;">16</span>
<div class="a" style="left:0px;top:622px;width:25px;height:1px;background:#c6c6c6;"></div>
<span class="t" style="left:5.27px;top:607.00px;font-size:13px;line-height:13px;color:#262626;">17</span>
<div class="a" style="left:0px;top:642px;width:25px;height:1px;background:#c6c6c6;"></div>
<span class="t" style="left:5.27px;top:627.00px;font-size:13px;line-height:13px;color:#262626;">18</span>
<div class="a" style="left:0px;top:662px;width:25px;height:1px;background:#c6c6c6;"></div>
<span class="t" style="left:5.27px;top:647.00px;font-size:13px;line-height:13px;color:#262626;">19</span>
<div class="a" style="left:0px;top:682px;width:25px;height:1px;background:#c6c6c6;"></div>
<span class="t" style="left:5.27px;top:667.00px;font-size:13px;line-height:13px;color:#262626;">20</span>
<div class="a" style="left:0px;top:702px;width:25px;height:1px;background:#c6c6c6;"></div>
<span class="t" style="left:5.27px;top:687.00px;font-size:13px;line-height:13px;color:#262626;">21</span>
<div class="a" style="left:0px;top:722px;width:25px;height:1px;background:#c6c6c6;"></div>
<span class="t" style="left:5.27px;top:707.00px;font-size:13px;line-height:13px;color:#262626;">22</span>
<div class="a" style="left:0px;top:742px;width:25px;height:1px;background:#c6c6c6;"></div>
<span class="t" style="left:5.27px;top:727.00px;font-size:13px;line-height:13px;color:#262626;">23</span>
<div class="a" style="left:0px;top:762px;width:25px;height:1px;background:#c6c6c6;"></div>
<span class="t" style="left:5.27px;top:747.00px;font-size:13px;line-height:13px;color:#262626;">24</span>
<div class="a" style="left:0px;top:782px;width:25px;height:1px;background:#c6c6c6;"></div>
<span class="t" style="left:5.27px;top:767.00px;font-size:13px;line-height:13px;color:#262626;">25</span>
<div class="a" style="left:0px;top:802px;width:25px;height:1px;background:#c6c6c6;"></div>
<span class="t" style="left:5.27px;top:787.00px;font-size:13px;line-height:13px;color:#262626;">26</span>
<div class="a" style="left:0px;top:822px;width:25px;height:1px;background:#c6c6c6;"></div>
<span class="t" style="left:5.27px;top:807.00px;font-size:13px;line-height:13px;color:#262626;">27</span>
<div class="a" style="left:0px;top:842px;width:25px;height:1px;background:#c6c6c6;"></div>
<span class="t" style="left:5.27px;top:827.00px;font-size:13px;line-height:13px;color:#262626;">28</span>
<div class="a" style="left:0px;top:862px;width:25px;height:1px;background:#c6c6c6;"></div>
<span class="t" style="left:5.27px;top:847.00px;font-size:13px;line-height:13px;color:#262626;">29</span>
<div class="a" style="left:0px;top:882px;width:25px;height:1px;background:#c6c6c6;"></div>
<span class="t" style="left:5.27px;top:867.00px;font-size:13px;line-height:13px;color:#262626;">30</span>
<div class="a" style="left:0px;top:902px;width:25px;height:1px;background:#c6c6c6;"></div>
<span class="t" style="left:5.27px;top:887.00px;font-size:13px;line-height:13px;color:#262626;">31</span>
<div class="a" style="left:0px;top:922px;width:25px;height:1px;background:#c6c6c6;"></div>
<span class="t" style="left:5.27px;top:907.00px;font-size:13px;line-height:13px;color:#262626;">32</span>
<div class="a" style="left:0px;top:942px;width:25px;height:1px;background:#c6c6c6;"></div>
<span class="t" style="left:5.27px;top:927.00px;font-size:13px;line-height:13px;color:#262626;">33</span>
<div class="a" style="left:0px;top:962px;width:25px;height:1px;background:#c6c6c6;"></div>
<span class="t" style="left:5.27px;top:947.00px;font-size:13px;line-height:13px;color:#262626;">34</span>
<div class="a" style="left:0px;top:982px;width:25px;height:1px;background:#c6c6c6;"></div>
<span class="t" style="left:5.27px;top:967.00px;font-size:13px;line-height:13px;color:#262626;">35</span>
<div class="a" style="left:1899px;top:203px;width:21px;height:787px;background:#e6e6e6;"></div>
<div class="a" style="left:1898px;top:222px;width:1px;height:768px;background:#9c9c9c;"></div>
<div class="a" style="left:1902px;top:485px;width:15px;height:490px;background:#d9d9d9;"></div>
<div class="a" style="left:1902px;top:206px;width:15px;height:14px;background:#fff;border:1px solid #c6c6c6;box-sizing:border-box;"></div>
<svg class="a" style="left:1906px;top:211px;" width="7" height="4" viewBox="0 0 7 4"><path d="M0 4L3.5 0 7 4z" fill="#666"/></svg>
<div class="a" style="left:1902px;top:220px;width:15px;height:265px;background:#fff;border:1px solid #a6a6a6;box-sizing:border-box;"></div>
<div class="a" style="left:1902px;top:975px;width:15px;height:14px;background:#fff;border:1px solid #c6c6c6;box-sizing:border-box;"></div>
<svg class="a" style="left:1906px;top:980px;" width="7" height="4" viewBox="0 0 7 4"><path d="M0 0h7L3.5 4z" fill="#666"/></svg>
<div class="a" style="left:0px;top:989px;width:1920px;height:1px;background:#ababab;"></div>
<div class="a" style="left:0px;top:990px;width:1920px;height:27px;background:#e6e6e6;"></div>
<div class="a" style="left:0px;top:1017px;width:1920px;height:1px;background:#c6c6c6;"></div>
<svg class="a" style="left:27px;top:999px;" width="4" height="7" viewBox="0 0 4 7"><path d="M4 0v7L0 3.5z" fill="#b8b8b8"/></svg>
<svg class="a" style="left:56px;top:999px;" width="4" height="7" viewBox="0 0 4 7"><path d="M0 0v7l4-3.5z" fill="#217346"/></svg>
<div class="a" style="left:100px;top:993px;width:1px;height:20px;background:#bdbdbd;"></div>
<div class="a" style="left:153px;top:989px;width:65px;height:24px;background:#fff;"></div>
<div class="a" style="left:153px;top:1011px;width:65px;height:3px;background:#217346;"></div>
<span class="t" style="left:112.19px;top:996.00px;font-size:13px;line-height:13px;color:#444;transform:scaleX(1.0421);">Start</span>
<span class="t" style="left:164.17px;top:996.00px;font-size:13px;line-height:13px;color:#217346;transform:scaleX(1.0613);"><b>1. Add</b></span>
<span class="t" style="left:230.24px;top:996.00px;font-size:13px;line-height:13px;color:#444;transform:scaleX(0.9694);">2. Fill</span>
<div class="a" style="left:275px;top:993px;width:1px;height:20px;background:#bdbdbd;"></div>
<span class="t" style="left:288.21px;top:996.00px;font-size:13px;line-height:13px;color:#444;transform:scaleX(1.0081);">3. Split</span>
<div class="a" style="left:342px;top:993px;width:1px;height:20px;background:#bdbdbd;"></div>
<span class="t" style="left:354.01px;top:996.00px;font-size:13px;line-height:13px;color:#444;transform:scaleX(1.0150);">4. Transpose</span>
<div class="a" style="left:444px;top:993px;width:1px;height:20px;background:#bdbdbd;"></div>
<span class="t" style="left:458.48px;top:996.00px;font-size:13px;line-height:13px;color:#444;transform:scaleX(1.0545);">5. Sort &amp; filter</span>
<div class="a" style="left:557px;top:993px;width:1px;height:20px;background:#bdbdbd;"></div>
<span class="t" style="left:569.20px;top:996.00px;font-size:13px;line-height:13px;color:#444;transform:scaleX(1.0251);">6. Tables</span>
<div class="a" style="left:636px;top:993px;width:1px;height:20px;background:#bdbdbd;"></div>
<span class="t" style="left:649.19px;top:996.00px;font-size:13px;line-height:13px;color:#444;transform:scaleX(1.0447);">7. Drop-downs</span>
<div class="a" style="left:752px;top:993px;width:1px;height:20px;background:#bdbdbd;"></div>
<span class="t" style="left:764.23px;top:996.00px;font-size:13px;line-height:13px;color:#444;transform:scaleX(0.9873);">8. Analyze</span>
<div class="a" style="left:838px;top:993px;width:1px;height:20px;background:#bdbdbd;"></div>
<span class="t" style="left:850.23px;top:996.00px;font-size:13px;line-height:13px;color:#444;transform:scaleX(0.9904);">9. Charts</span>
<div class="a" style="left:917px;top:993px;width:1px;height:20px;background:#bdbdbd;"></div>
<span class="t" style="left:930.93px;top:996.00px;font-size:13px;line-height:13px;color:#444;transform:scaleX(0.9929);">10. PivotTables</span>
<div class="a" style="left:1034px;top:993px;width:1px;height:20px;background:#bdbdbd;"></div>
<span class="t" style="left:1046.54px;top:996.00px;font-size:13px;line-height:13px;color:#444;transform:scaleX(0.9782);">Learn</span>
<span class="t" style="left:1090.81px;top:996.00px;font-size:13px;line-height:13px;color:#217346;font-weight:bold;transform:scaleX(1.1418);">...</span>
<svg class="a" style="left:1116px;top:995px;" width="16" height="16" viewBox="0 0 16 16"><circle cx="8" cy="8" r="7.2" fill="none" stroke="#666" stroke-width="1.2"/><path d="M8 4v8M4 8h8" stroke="#666" stroke-width="1.3"/></svg>
<div class="a" style="left:1152px;top:998px;width:2px;height:2px;background:#b4b4b4;"></div>
<div class="a" style="left:1152px;top:1002px;width:2px;height:2px;background:#b4b4b4;"></div>
<div class="a" style="left:1152px;top:1006px;width:2px;height:2px;background:#b4b4b4;"></div>
<div class="a" style="left:1169px;top:996px;width:16px;height:15px;background:#fff;border:1px solid #c6c6c6;box-sizing:border-box;"></div>
<svg class="a" style="left:1174px;top:999px;" width="4" height="7" viewBox="0 0 4 7"><path d="M4 0v7L0 3.5z" fill="#444"/></svg>
<div class="a" style="left:1849px;top:996px;width:35px;height:15px;background:#d9d9d9;"></div>
<div class="a" style="left:1184px;top:996px;width:666px;height:15px;background:#fff;border:1px solid #c6c6c6;box-sizing:border-box;"></div>
<div class="a" style="left:1886px;top:996px;width:15px;height:15px;background:#fff;border:1px solid #c6c6c6;box-sizing:border-box;"></div>
<svg class="a" style="left:1892px;top:999px;" width="4" height="7" viewBox="0 0 4 7"><path d="M0 0v7l4-3.5z" fill="#444"/></svg>
<div class="a" style="left:0px;top:1018px;width:1920px;height:22px;background:#f3f3f3;"></div>
<div class="a" style="left:1634px;top:1017px;width:38px;height:22px;background:#c6c6c6;"></div>
<svg class="a" style="left:1646px;top:1021px;" width="13" height="13" viewBox="0 0 13 13"><rect x="0.0" y="0.0" width="3.5" height="3.5" fill="#666"/><rect x="0.0" y="4.5" width="3.5" height="3.5" fill="#666"/><rect x="0.0" y="9.0" width="3.5" height="3.5" fill="#666"/><rect x="4.5" y="0.0" width="3.5" height="3.5" fill="#666"/><rect x="4.5" y="4.5" width="3.5" height="3.5" fill="#666"/><rect x="4.5" y="9.0" width="3.5" height="3.5" fill="#666"/><rect x="9.0" y="0.0" width="3.5" height="3.5" fill="#666"/><rect x="9.0" y="4.5" width="3.5" height="3.5" fill="#666"/><rect x="9.0" y="9.0" width="3.5" height="3.5" fill="#666"/></svg>
<svg class="a" style="left:1684px;top:1021px;" width="15" height="14" viewBox="0 0 15 14"><path d="M.5 .5h14v13h-14z" fill="none" stroke="#666"/><path d="M3.5 3.5h8v7h-8zM5 5.5h5M5 7.5h5" fill="none" stroke="#666"/></svg>
<svg class="a" style="left:1722px;top:1021px;" width="15" height="14" viewBox="0 0 15 14"><path d="M.5 .5h14v13h-14zM.5 6.5h7v-6M7.5 .5v6" fill="none" stroke="#666"/></svg>
<div class="a" style="left:1753px;top:1027px;width:7px;height:2px;background:#555;"></div>
<div class="a" style="left:1763px;top:1028px;width:100px;height:1px;background:#9a9a9a;"></div>
<div class="a" style="left:1811px;top:1022px;width:5px;height:11px;background:#666;"></div>
<div class="a" style="left:1866px;top:1027px;width:8px;height:2px;background:#555;"></div>
<div class="a" style="left:1869px;top:1024px;width:2px;height:8px;background:#555;"></div>
<span class="t" style="left:1885.06px;top:1022.00px;font-size:12px;line-height:12px;color:#444;transform:scaleX(0.8885);">100%</span>
<div class="a" style="left:26px;top:223px;width:1872px;height:766px;background:#ffffff;"></div>
<div class="a" style="left:59px;top:250px;width:598px;height:480px;background:#f4f4f4;"></div>
<span class="t" style="left:82.62px;top:274.00px;font-size:30px;line-height:30px;color:#3a3a3a;-webkit-text-stroke:0.9px #f4f4f4;paint-order:normal;transform:scaleX(0.9315);">Add numbers like a champ</span>
<div class="a" style="left:84px;top:314px;width:548px;height:3px;background:#217346;"></div>
<span class="t" style="left:82.74px;top:331.00px;font-size:15px;line-height:15px;color:#3f3f3f;transform:scaleX(0.9605);">Here are some ways to add up numbers in Excel:</span>
<svg class="a" style="left:84px;top:354.0px;" width="39" height="39" viewBox="0 0 39 39"><circle cx="19.5" cy="19.5" r="19.5" fill="#217346"/></svg>
<span class="t" style="left:97.76px;top:363.00px;font-size:21px;line-height:21px;color:#fff;font-weight:bold;">1</span>
<svg class="a" style="left:84px;top:404.5px;" width="39" height="39" viewBox="0 0 39 39"><circle cx="19.5" cy="19.5" r="19.5" fill="#217346"/></svg>
<span class="t" style="left:97.76px;top:414.00px;font-size:21px;line-height:21px;color:#fff;font-weight:bold;">2</span>
<svg class="a" style="left:84px;top:456.5px;" width="39" height="39" viewBox="0 0 39 39"><circle cx="19.5" cy="19.5" r="19.5" fill="#217346"/></svg>
<span class="t" style="left:97.76px;top:466.00px;font-size:21px;line-height:21px;color:#fff;font-weight:bold;">3</span>
<svg class="a" style="left:84px;top:508.0px;" width="39" height="39" viewBox="0 0 39 39"><circle cx="19.5" cy="19.5" r="19.5" fill="#217346"/></svg>
<span class="t" style="left:97.76px;top:517.00px;font-size:21px;line-height:21px;color:#fff;font-weight:bold;">4</span>
<svg class="a" style="left:84px;top:557.5px;" width="39" height="39" viewBox="0 0 39 39"><circle cx="19.5" cy="19.5" r="19.5" fill="#217346"/></svg>
<span class="t" style="left:97.76px;top:566.00px;font-size:21px;line-height:21px;color:#fff;font-weight:bold;">5</span>
<span class="t" style="left:135.41px;top:366.00px;font-size:15px;line-height:15px;color:#3f3f3f;transform:scaleX(0.9854);">Select the yellow cell under the amounts for fruit.</span>
<span class="t" style="left:135.42px;top:418.00px;font-size:15px;line-height:15px;color:#3f3f3f;transform:scaleX(0.9780);">Type =<b>SUM(D4:D7)</b>, and then press enter. When you're done, you'll see</span>
<span class="t" style="left:135.42px;top:437.00px;font-size:15px;line-height:15px;color:#3f3f3f;transform:scaleX(0.9823);">the result of 170.</span>
<span class="t" style="left:135.43px;top:469.00px;font-size:15px;line-height:15px;color:#3f3f3f;transform:scaleX(0.9717);">Here's another way to add, using a shortcut key. Select the yellow cell</span>
<span class="t" style="left:135.41px;top:488.00px;font-size:15px;line-height:15px;color:#3f3f3f;transform:scaleX(0.9912);">under the amounts for meat.</span>
<span class="t" style="left:135.49px;top:519.00px;font-size:15px;line-height:15px;color:#3f3f3f;transform:scaleX(0.8948);">Press</span>
<div class="a" style="left:173px;top:513px;width:46px;height:27px;background:#fff;border:1px solid #222;box-sizing:border-box;border-radius:5px;"></div>
<span class="t" style="left:189.38px;top:521.00px;font-size:11px;line-height:11px;color:#222;">Alt</span>
<div class="a" style="left:225px;top:513px;width:45px;height:27px;background:#fff;border:1px solid #222;box-sizing:border-box;border-radius:5px;"></div>
<span class="t" style="left:244.08px;top:521.00px;font-size:11px;line-height:11px;color:#222;">=</span>
<span class="t" style="left:275.35px;top:519.00px;font-size:15px;line-height:15px;color:#3f3f3f;transform:scaleX(0.9448);">first. Then, press <b>Enter</b>.</span>
<span class="t" style="left:135.43px;top:570.00px;font-size:15px;line-height:15px;color:#3f3f3f;transform:scaleX(0.9713);">Now add only the numbers over 50. Select the last yellow cell. Type</span>
<span class="t" style="left:135.42px;top:589.00px;font-size:15px;line-height:15px;color:#3f3f3f;transform:scaleX(0.9777);">=<b>SUMIF(D11:D15,"&gt;50")</b> and then press <b>Enter</b>. The result is 100.</span>
<div class="a" style="left:84px;top:621px;width:548px;height:3px;background:#217346;"></div>
<svg class="a" style="left:80px;top:645px;" width="300" height="65" viewBox="0 0 300 65"><path d="M4.5 4.5H290.5V40.5H154.5V46.5H161.5L147.5 60.5L133.5 46.5H140.5V40.5H4.5Z" fill="#d9d9d9" stroke="#79b595" stroke-width="1"/></svg>
<span class="t" style="left:134.32px;top:662.00px;font-size:15px;line-height:15px;color:#217346;transform:scaleX(1.0899);">Dive down for more detail</span>
<svg class="a" style="left:505px;top:645px;" width="130" height="45" viewBox="0 0 130 45"><path d="M5.5 4.5H110V16.5H117.5V11L126.5 22.5L117.5 34V28.5H110V40.5H5.5Z" fill="#fff" stroke="#217346" stroke-width="1"/></svg>
<span class="t" style="left:527.72px;top:662.00px;font-size:15px;line-height:15px;color:#217346;transform:scaleX(1.0930);">Next step</span>
<div class="a" style="left:61px;top:800px;width:598px;height:190px;background:#f4f4f4;"></div>
<span class="t" style="left:84.30px;top:824.00px;font-size:30px;line-height:30px;color:#3a3a3a;-webkit-text-stroke:0.9px #f4f4f4;transform:scaleX(0.9436);">More about the SUM function</span>
<div class="a" style="left:86px;top:865px;width:548px;height:3px;background:#217346;"></div>
<span class="t" style="left:82.72px;top:883.00px;font-size:15px;line-height:15px;color:#3f3f3f;transform:scaleX(0.9778);">In some of the above tips, we taught you how to use the SUM function. Here are</span>
<span class="t" style="left:82.71px;top:902.00px;font-size:15px;line-height:15px;color:#3f3f3f;transform:scaleX(0.9886);">more details about it. Double-click a yellow cell on the right, and then read along with</span>
<span class="t" style="left:82.70px;top:922.00px;font-size:15px;line-height:15px;color:#3f3f3f;transform:scaleX(1.0031);">the text below.</span>
<span class="t" style="left:82.71px;top:961.00px;font-size:15px;line-height:15px;color:#3f3f3f;transform:scaleX(0.9850);">If the SUM function could talk, it would say this:</span>
<div class="a" style="left:694px;top:322px;width:125px;height:20px;background:#339966;"></div>
<span class="t" style="left:696.59px;top:327.00px;font-size:13.5px;line-height:13.5px;color:#fff;transform:scaleX(1.1229);">Fruit</span>
<span class="t" style="left:758.41px;top:327.00px;font-size:13.5px;line-height:13.5px;color:#fff;transform:scaleX(1.0955);">Amount</span>
<div class="a" style="left:694px;top:342px;width:125px;height:80px;background:#f2f2f2;"></div>
<span class="t" style="left:696.43px;top:347.00px;font-size:13.5px;line-height:13.5px;color:#000;transform:scaleX(1.0791);">Apples</span>
<span class="t" style="left:801.07px;top:347.00px;font-size:13.5px;line-height:13.5px;color:#000;transform:scaleX(1.0290);">50</span>
<span class="t" style="left:696.48px;top:367.00px;font-size:13.5px;line-height:13.5px;color:#000;transform:scaleX(1.0068);">Oranges</span>
<span class="t" style="left:801.07px;top:367.00px;font-size:13.5px;line-height:13.5px;color:#000;transform:scaleX(1.0290);">20</span>
<span class="t" style="left:696.51px;top:387.00px;font-size:13.5px;line-height:13.5px;color:#000;transform:scaleX(0.9772);">Bananas</span>
<span class="t" style="left:801.07px;top:387.00px;font-size:13.5px;line-height:13.5px;color:#000;transform:scaleX(1.0290);">60</span>
<span class="t" style="left:696.47px;top:407.00px;font-size:13.5px;line-height:13.5px;color:#000;transform:scaleX(1.0235);">Lemons</span>
<span class="t" style="left:801.07px;top:407.00px;font-size:13.5px;line-height:13.5px;color:#000;transform:scaleX(1.0290);">40</span>
<div class="a" style="left:756px;top:422px;width:63px;height:20px;background:#ffff99;border:1px solid #a6a6a6;box-sizing:border-box;"></div>
<div class="a" style="left:880px;top:322px;width:125px;height:20px;background:#339966;"></div>
<span class="t" style="left:882.60px;top:327.00px;font-size:13.5px;line-height:13.5px;color:#fff;transform:scaleX(1.1128);">Meat</span>
<span class="t" style="left:944.41px;top:327.00px;font-size:13.5px;line-height:13.5px;color:#fff;transform:scaleX(1.0955);">Amount</span>
<div class="a" style="left:880px;top:342px;width:125px;height:80px;background:#f2f2f2;"></div>
<span class="t" style="left:882.41px;top:347.00px;font-size:13.5px;line-height:13.5px;color:#000;transform:scaleX(1.0932);">Beef</span>
<span class="t" style="left:987.07px;top:347.00px;font-size:13.5px;line-height:13.5px;color:#000;transform:scaleX(1.0290);">50</span>
<span class="t" style="left:882.47px;top:367.00px;font-size:13.5px;line-height:13.5px;color:#000;transform:scaleX(1.0305);">Chicken</span>
<span class="t" style="left:987.07px;top:367.00px;font-size:13.5px;line-height:13.5px;color:#000;transform:scaleX(1.0290);">30</span>
<span class="t" style="left:882.44px;top:387.00px;font-size:13.5px;line-height:13.5px;color:#000;transform:scaleX(1.0595);">Pork</span>
<span class="t" style="left:987.70px;top:387.00px;font-size:13.5px;line-height:13.5px;color:#000;transform:scaleX(0.9842);">10</span>
<span class="t" style="left:882.46px;top:407.00px;font-size:13.5px;line-height:13.5px;color:#000;transform:scaleX(1.0378);">Fish</span>
<span class="t" style="left:987.07px;top:407.00px;font-size:13.5px;line-height:13.5px;color:#000;transform:scaleX(1.0290);">50</span>
<div class="a" style="left:942px;top:422px;width:63px;height:20px;background:#ffff99;border:1px solid #a6a6a6;box-sizing:border-box;"></div>
<div class="a" style="left:694px;top:462px;width:125px;height:20px;background:#339966;"></div>
<span class="t" style="left:696.57px;top:467.00px;font-size:13.5px;line-height:13.5px;color:#fff;transform:scaleX(1.1483);">Item</span>
<span class="t" style="left:758.41px;top:467.00px;font-size:13.5px;line-height:13.5px;color:#fff;transform:scaleX(1.0955);">Amount</span>
<div class="a" style="left:694px;top:482px;width:125px;height:100px;background:#f2f2f2;"></div>
<span class="t" style="left:696.47px;top:487.00px;font-size:13.5px;line-height:13.5px;color:#000;transform:scaleX(1.0287);">Bread</span>
<span class="t" style="left:801.07px;top:487.00px;font-size:13.5px;line-height:13.5px;color:#000;transform:scaleX(1.0290);">50</span>
<span class="t" style="left:696.44px;top:507.00px;font-size:13.5px;line-height:13.5px;color:#000;transform:scaleX(1.0617);">Donuts</span>
<span class="t" style="left:793.68px;top:507.00px;font-size:13.5px;line-height:13.5px;color:#000;transform:scaleX(1.0138);">100</span>
<span class="t" style="left:696.46px;top:527.00px;font-size:13.5px;line-height:13.5px;color:#000;transform:scaleX(1.0369);">Cookies</span>
<span class="t" style="left:801.07px;top:527.00px;font-size:13.5px;line-height:13.5px;color:#000;transform:scaleX(1.0290);">40</span>
<span class="t" style="left:696.52px;top:547.00px;font-size:13.5px;line-height:13.5px;color:#000;transform:scaleX(0.9660);">Cakes</span>
<span class="t" style="left:801.07px;top:547.00px;font-size:13.5px;line-height:13.5px;color:#000;transform:scaleX(1.0290);">50</span>
<span class="t" style="left:696.47px;top:567.00px;font-size:13.5px;line-height:13.5px;color:#000;transform:scaleX(1.0266);">Pies</span>
<span class="t" style="left:801.07px;top:567.00px;font-size:13.5px;line-height:13.5px;color:#000;transform:scaleX(1.0290);">20</span>
<div class="a" style="left:756px;top:582px;width:63px;height:20px;background:#ffff99;border:1px solid #a6a6a6;box-sizing:border-box;"></div>
<div class="a" style="left:880px;top:462px;width:125px;height:20px;background:#339966;"></div>
<span class="t" style="left:882.57px;top:467.00px;font-size:13.5px;line-height:13.5px;color:#fff;transform:scaleX(1.1483);">Item</span>
<span class="t" style="left:944.41px;top:467.00px;font-size:13.5px;line-height:13.5px;color:#fff;transform:scaleX(1.0955);">Amount</span>
<div class="a" style="left:880px;top:482px;width:125px;height:100px;background:#f2f2f2;"></div>
<span class="t" style="left:882.47px;top:487.00px;font-size:13.5px;line-height:13.5px;color:#000;transform:scaleX(1.0287);">Bread</span>
<span class="t" style="left:987.07px;top:487.00px;font-size:13.5px;line-height:13.5px;color:#000;transform:scaleX(1.0290);">50</span>
<span class="t" style="left:882.44px;top:507.00px;font-size:13.5px;line-height:13.5px;color:#000;transform:scaleX(1.0617);">Donuts</span>
<span class="t" style="left:979.68px;top:507.00px;font-size:13.5px;line-height:13.5px;color:#000;transform:scaleX(1.0138);">100</span>
<span class="t" style="left:882.46px;top:527.00px;font-size:13.5px;line-height:13.5px;color:#000;transform:scaleX(1.0369);">Cookies</span>
<span class="t" style="left:987.07px;top:527.00px;font-size:13.5px;line-height:13.5px;color:#000;transform:scaleX(1.0290);">40</span>
<span class="t" style="left:882.52px;top:547.00px;font-size:13.5px;line-height:13.5px;color:#000;transform:scaleX(0.9660);">Cakes</span>
<span class="t" style="left:987.07px;top:547.00px;font-size:13.5px;line-height:13.5px;color:#000;transform:scaleX(1.0290);">50</span>
<span class="t" style="left:882.47px;top:567.00px;font-size:13.5px;line-height:13.5px;color:#000;transform:scaleX(1.0266);">Pies</span>
<span class="t" style="left:987.07px;top:567.00px;font-size:13.5px;line-height:13.5px;color:#000;transform:scaleX(1.0290);">20</span>
<div class="a" style="left:941px;top:581px;width:65px;height:23px;background:#f2f2f2;border:2px solid #f4b183;box-sizing:border-box;"></div>
<svg class="a" style="left:965px;top:605px;" width="45" height="40" viewBox="0 0 45 40"><path d="M39 31c-12 5-24-3-28-20" fill="none" stroke="#f4b183" stroke-width="2"/><path d="M10 4l-5 9h10z" fill="#f4b183"/></svg>
<svg class="a" style="left:1008px;top:610px;" width="35" height="46" viewBox="0 0 35 46"><circle cx="17" cy="17.4" r="12" fill="none" stroke="#f4b183" stroke-width="5.8"/><path d="M8.3 30.2L2.3 40.8l4.5-.6 3 4.3 5.5-13.3-3.6-.2z" fill="#f4b183"/><path d="M25.7 30.2l6 10.6-4.5-.6-3 4.3-5.5-13.3 3.6-.2z" fill="#f4b183"/><path d="M8 30.5q9 4 18 0" fill="none" stroke="#fff" stroke-width="1"/></svg>
<span class="t" style="left:1047.10px;top:614.00px;font-size:15px;line-height:15px;color:#f4b183;transform:scaleX(1.0020);"><b>EXTRA CREDIT</b></span>
<span class="t" style="left:1047.18px;top:633.00px;font-size:14px;line-height:14px;color:#000;transform:scaleX(0.9781);">Try adding another</span>
<span class="t" style="left:1047.19px;top:651.00px;font-size:14px;line-height:14px;color:#000;transform:scaleX(0.9590);">SUMIF formula here,</span>
<span class="t" style="left:1047.17px;top:669.00px;font-size:14px;line-height:14px;color:#000;transform:scaleX(0.9933);">but add amounts that</span>
<span class="t" style="left:1047.21px;top:687.00px;font-size:14px;line-height:14px;color:#000;transform:scaleX(0.9425);">are <i>less than 100</i>. The</span>
<span class="t" style="left:1047.19px;top:705.00px;font-size:14px;line-height:14px;color:#000;transform:scaleX(0.9641);">result should be 160.</span>
<div class="a" style="left:1338px;top:681px;width:502px;height:284px;box-shadow:0 3px 12px rgba(0,0,0,0.45);background:#2a2a2a;"></div>
<svg class="a" style="left:1338px;top:681px;" width="502" height="284" viewBox="0 0 502 284"><defs><filter id="bl" x="-10%" y="-10%" width="120%" height="120%"><feGaussianBlur stdDeviation="3"/></filter>
<filter id="bl2"><feGaussianBlur stdDeviation="1.2"/></filter></defs>
<rect x="0" y="0" width="502" height="284" fill="#3c3c3e"/>
<g filter="url(#bl)">
<rect x="0" y="0" width="260" height="120" fill="#77787c"/>
<rect x="260" y="0" width="150" height="82" fill="#6e6f71"/>
<rect x="319" y="0" width="34" height="27" fill="#262626"/>
<rect x="319" y="22" width="34" height="20" fill="#3a4558"/>
<rect x="407" y="0" width="35" height="140" fill="#4a4a4c"/>
<rect x="440" y="0" width="62" height="40" fill="#161616"/>
<rect x="260" y="82" width="150" height="60" fill="#3e3e3e"/>
<rect x="268" y="79" width="140" height="10" fill="#6a6a6a"/>
<rect x="0" y="100" width="40" height="45" fill="#555658"/>
<path d="M4 45 Q20 25 38 40 L40 142 H4z" fill="#2a2a2a"/>
<rect x="10" y="20" width="26" height="25" fill="#303030"/>
<rect x="40" y="8" width="32" height="134" fill="#222429"/>
<path d="M68 20 Q100 5 135 30 L143 123 H72z" fill="#2e3450"/>
<rect x="134" y="18" width="18" height="72" fill="#6a6a6a"/>
<rect x="150" y="35" width="26" height="107" fill="#1e1e1e"/>
<rect x="229" y="0" width="50" height="123" fill="#34372f"/>
<rect x="317" y="38" width="42" height="85" fill="#25304a"/>
<rect x="357" y="14" width="66" height="72" fill="#5c1c20"/>
<rect x="360" y="85" width="55" height="57" fill="#1a1a1a"/>
<rect x="440" y="30" width="62" height="112" fill="#1c1e24"/>
<rect x="478" y="40" width="24" height="70" fill="#3a3830"/>
<path d="M0 150 L70 139 L80 284 H0z" fill="#74502f"/><path d="M0 200 L75 185 M0 225 L77 210 M0 250 L78 235" stroke="#5e4027" stroke-width="3"/>
<rect x="255" y="123" width="85" height="63" fill="#74502f"/>
<rect x="339" y="141" width="163" height="45" fill="#1f1f1f"/>
<rect x="409" y="141" width="28" height="45" fill="#454545"/>
<path d="M213 200 Q260 180 340 180 L502 176 V284 H213z" fill="#6e4d36"/>
<rect x="465" y="168" width="37" height="56" fill="#5a5a5a"/>
<rect x="68" y="102" width="170" height="182" fill="#1e1e1e"/>
<path d="M238 150 L290 190 L285 238 L225 240z" fill="#1e1e1e"/>
<rect x="150" y="40" width="100" height="70" fill="#242424"/><path d="M168 60 Q165 25 205 20 Q245 22 246 55 L240 62 Q205 45 172 65z" fill="#1c1c1c"/>
<ellipse cx="206" cy="92" rx="33" ry="40" fill="#5a4438"/>
<path d="M151 140 L215 135 L215 284 H151z" fill="#6b6b6b"/>
<rect x="172" y="244" width="23" height="40" fill="#3a2025"/>
<rect x="227" y="203" width="25" height="34" fill="#6e5a50"/>
</g>
<g filter="url(#bl2)">
<path d="M326 165 L414 180 L389 244 L308 220z" fill="#1c1c1c"/>
<path d="M329 170 L410 184 L386 238 L311 217z" fill="#9aa0a0"/>
<ellipse cx="348" cy="205" rx="14" ry="17" fill="#2a3530"/>
<path d="M261 240 L311 219 L389 245 L356 279z" fill="#2a2a2a"/>
</g>
<rect x="0" y="279" width="37" height="5" fill="#ff0000"/>
<g fill="none" stroke="#fff" stroke-width="1.6">
<path d="M417.5 11.5h20M417.5 16.5h20M417.5 21.5h20"/>
<path d="M472 13l10 10M482 13l-10 10" stroke-width="1.8"/>
<path d="M477.5 52.5h-10v12h17v-7M474 58l10-8M479 50h5v5"/>
<path d="M189 140a9.5 9.5 0 1 1 19 0"/><path d="M186 136l3 5 4-4z" fill="#fff" stroke="none"/>
<path d="M246 134v17l12-8.5z" stroke-width="1.6"/>
<path d="M295 140a9.5 9.5 0 1 1 19 0"/><path d="M317 136l-3 5-4-4z" fill="#fff" stroke="none"/>
</g>
<text x="190" y="150" font-family="Liberation Sans" font-size="13" fill="#fff">10</text>
<text x="294" y="150" font-family="Liberation Sans" font-size="13" fill="#fff">30</text>
</svg>
<div class="a" style="left:1337px;top:680px;width:504px;height:286px;box-sizing:border-box;border:1px solid #f0743a;"></div>
</body></html>
